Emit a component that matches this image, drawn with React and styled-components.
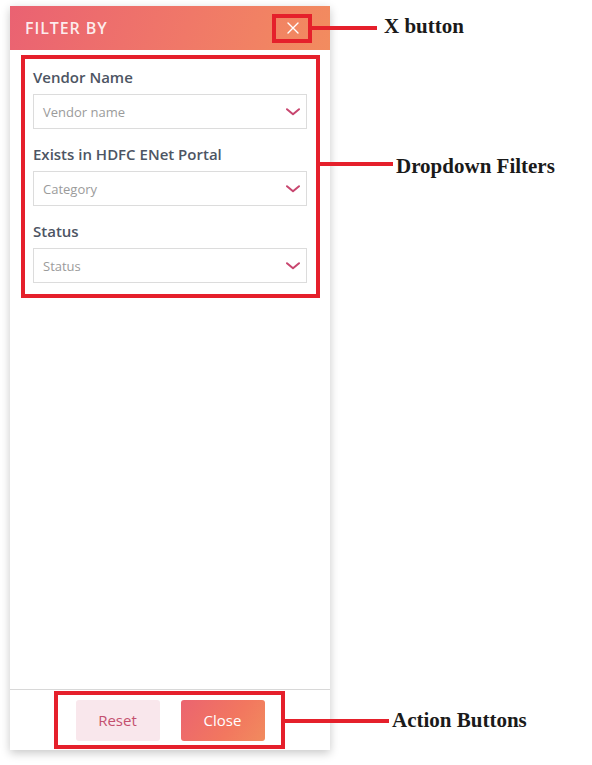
import React from "react";
import styled, { createGlobalStyle } from "styled-components";

const GlobalStyle = createGlobalStyle`
  html, body { margin: 0; padding: 0; background: #ffffff; }
  body { font-family: "Open Sans", "Noto Sans", sans-serif; }
  * { box-sizing: border-box; }
`;

const Canvas = styled.div`
  position: relative;
  width: 592px;
  height: 765px;
  overflow: hidden;
  padding: 6px 0 0 10px;
`;

const Panel = styled.aside`
  width: 320px;
  height: 744px;
  display: flex;
  flex-direction: column;
  background: #ffffff;
  box-shadow: 0 3px 9px rgba(0, 0, 0, 0.22);
`;

const Header = styled.header`
  height: 44px;
  flex: none;
  display: flex;
  align-items: center;
  justify-content: space-between;
  padding: 0 21px 0 15px;
  background: linear-gradient(110deg, #ea6272 0%, #f07868 55%, #f28c5f 100%);
`;

const Title = styled.h2`
  margin: 0;
  font-size: 16px;
  font-weight: 600;
  letter-spacing: 0.9px;
  color: rgba(255, 255, 255, 0.88);
`;

const IconButton = styled.button`
  width: 32px;
  height: 29px;
  border: 0;
  padding: 0;
  background: transparent;
  display: flex;
  align-items: center;
  justify-content: center;
  cursor: pointer;
`;

const Body = styled.div`
  flex: 1;
  display: flex;
  flex-direction: column;
  gap: 15px;
  padding: 17px 23px;
`;

const Field = styled.div`
  display: flex;
  flex-direction: column;
  gap: 7px;
`;

const Label = styled.label`
  font-size: 15px;
  font-weight: 600;
  line-height: 20px;
  color: #4d5563;
`;

const Select = styled.div`
  height: 35px;
  border: 1px solid #dcdcdc;
  display: flex;
  align-items: center;
  justify-content: space-between;
  padding: 0 6px 0 9px;
  font-size: 13px;
  color: #9b9b9b;
`;

const Footer = styled.footer`
  height: 61px;
  flex: none;
  border-top: 1px solid #d8d8d8;
  display: flex;
  align-items: center;
  justify-content: center;
  gap: 21px;
`;

const ActionButton = styled.button`
  width: 84px;
  height: 41px;
  border: 0;
  border-radius: 3px;
  font-family: inherit;
  font-size: 15px;
  cursor: pointer;
  color: ${(p) => (p.$primary ? "#ffffff" : "#c4506f")};
  background: ${(p) =>
    p.$primary
      ? "linear-gradient(125deg, #eb6470 0%, #f2775f 60%, #f18b5e 100%)"
      : "#f9e7ec"};
`;

/* Annotation callouts (overlaid on the screenshot) */
const AnnoBox = styled.div`
  position: absolute;
  border: 4px solid #e5202b;
  pointer-events: none;
`;

const AnnoLine = styled.div`
  position: absolute;
  height: 4px;
  background: #e5202b;
`;

const AnnoLabel = styled.div`
  position: absolute;
  font-family: "Liberation Serif", "Times New Roman", serif;
  font-weight: 700;
  font-size: 21px;
  line-height: 24px;
  color: #1a1a1a;
  white-space: nowrap;
`;

const Chevron = () => (
  <svg width="14" height="8" viewBox="0 0 14 8" aria-hidden="true">
    <path d="M1 1.2 L7 6.2 L13 1.2" fill="none" stroke="#c8466f" strokeWidth="2" strokeLinecap="round" strokeLinejoin="round" />
  </svg>
);

const CrossIcon = () => (
  <svg width="12" height="12" viewBox="0 0 12 12" aria-hidden="true">
    <path d="M1 1 L11 11 M11 1 L1 11" stroke="#ffffff" strokeWidth="1.4" strokeLinecap="round" />
  </svg>
);

const Callout = ({ box, line, label, text }) => (
  <>
    <AnnoBox style={{ left: box[0], top: box[1], width: box[2], height: box[3] }} />
    <AnnoLine style={{ left: line[0], top: line[1], width: line[2] }} />
    <AnnoLabel style={{ left: label[0], top: label[1] }}>{text}</AnnoLabel>
  </>
);

const filters = [
  { label: "Vendor Name", placeholder: "Vendor name" },
  { label: "Exists in HDFC ENet Portal", placeholder: "Category" },
  { label: "Status", placeholder: "Status" },
];

export default function App() {
  return (
    <>
      <GlobalStyle />
      <Canvas>
        <Panel>
          <Header>
            <Title>FILTER BY</Title>
            <IconButton aria-label="Close filters">
              <CrossIcon />
            </IconButton>
          </Header>
          <Body>
            {filters.map((f) => (
              <Field key={f.label}>
                <Label>{f.label}</Label>
                <Select>
                  <span>{f.placeholder}</span>
                  <Chevron />
                </Select>
              </Field>
            ))}
          </Body>
          <Footer>
            <ActionButton>Reset</ActionButton>
            <ActionButton $primary>Close</ActionButton>
          </Footer>
        </Panel>

        <Callout box={[272, 14, 40, 29]} line={[312, 26, 65]} label={[384, 14]} text="X button" />
        <Callout box={[21, 55, 299, 243]} line={[320, 162, 73]} label={[396, 154]} text="Dropdown Filters" />
        <Callout box={[54, 691, 231, 58]} line={[285, 719, 104]} label={[392, 708]} text="Action Buttons" />
      </Canvas>
    </>
  );
}
